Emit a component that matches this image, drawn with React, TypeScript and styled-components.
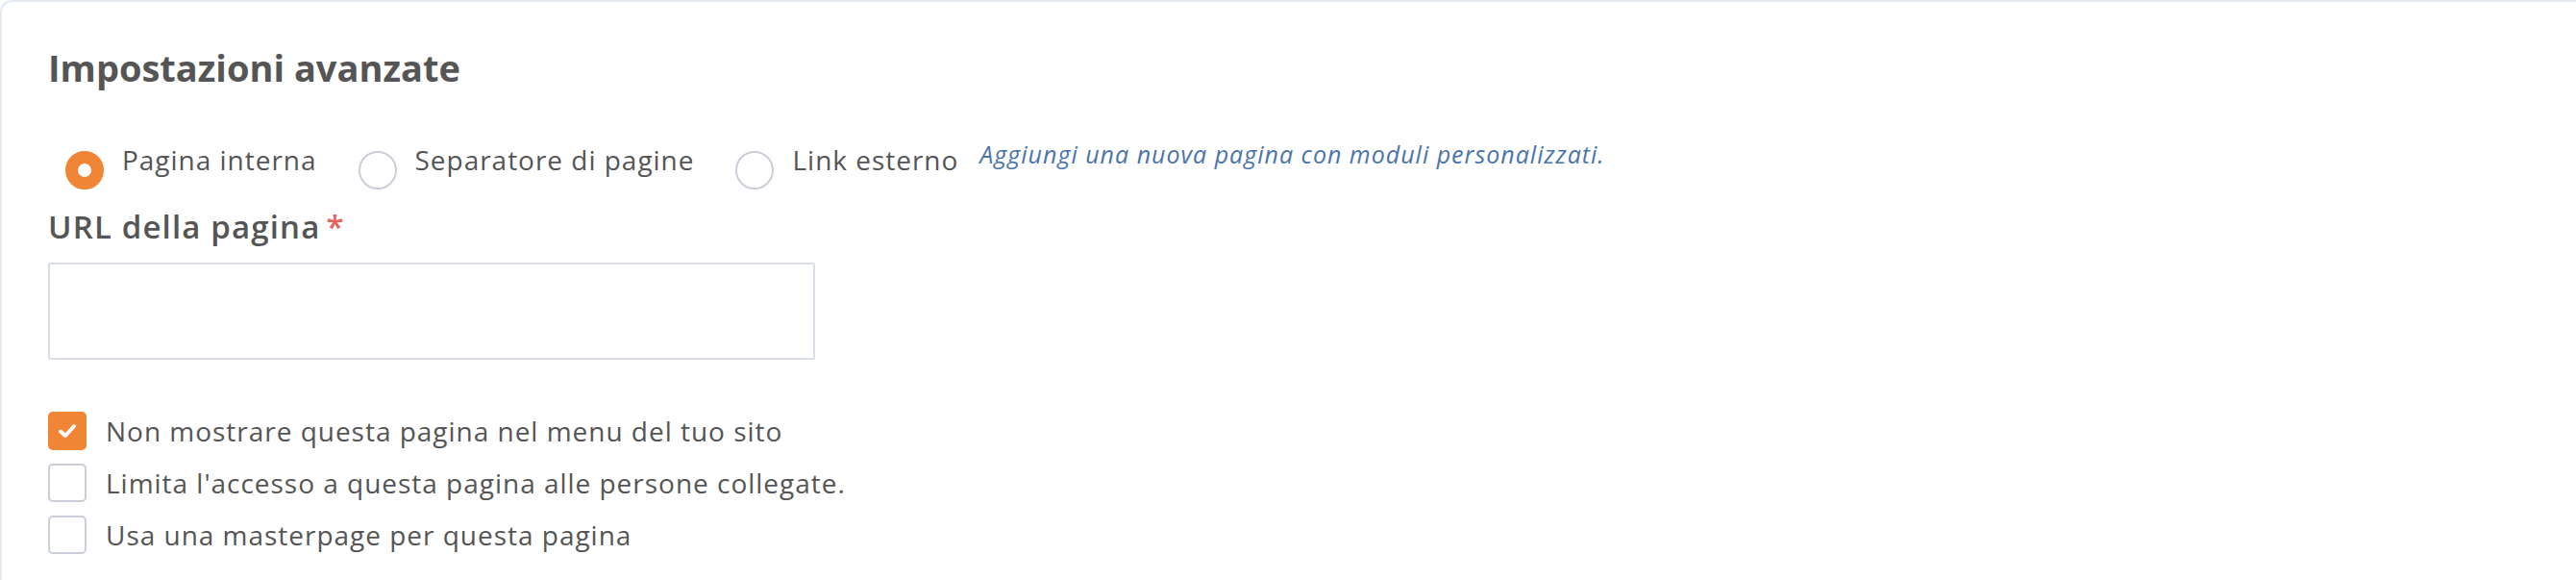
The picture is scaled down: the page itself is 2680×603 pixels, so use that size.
import React, { useState } from 'react';
import styled, { createGlobalStyle } from 'styled-components';

const GlobalStyle = createGlobalStyle`
  html, body {
    margin: 0;
    padding: 0;
    background: #ffffff;
  }
  body {
    font-family: 'Open Sans', 'Noto Sans', sans-serif;
    color: #555555;
  }
`;

const Card = styled.section`
  box-sizing: border-box;
  min-height: 640px;
  border-left: 2px solid #e4e9f2;
  border-top: 2px solid #e4e9f2;
  border-top-left-radius: 12px;
  padding: 44px 0 0 48px;
`;

const Title = styled.h2`
  margin: 0;
  font-size: 38px;
  line-height: 48px;
  font-weight: 700;
  color: #555555;
`;

const RadioRow = styled.div`
  display: flex;
  align-items: flex-start;
  margin-top: 55px;
  padding-left: 18px;
`;

const RadioItem = styled.label`
  display: flex;
  align-items: flex-start;
  margin-right: 43px;
  cursor: pointer;

  &:last-of-type {
    margin-right: 22px;
  }
`;

const RadioCircle = styled.span<{ $checked: boolean }>`
  box-sizing: border-box;
  width: 40px;
  height: 40px;
  margin-top: 8px;
  margin-right: 19px;
  border-radius: 50%;
  flex-shrink: 0;
  background: #ffffff;
  border: ${(p) => (p.$checked ? '13px solid #ef8535' : '2px solid #c9ced9')};
`;

const OptionText = styled.span`
  font-size: 28px;
  line-height: 34px;
  letter-spacing: 0.035em;
  color: #555555;
  white-space: nowrap;
`;

const Hint = styled.span`
  font-size: 25px;
  line-height: 29px;
  letter-spacing: 0.04em;
  font-style: italic;
  color: #4a74aa;
  margin-top: -3px;
  white-space: nowrap;
`;

const FieldLabel = styled.div`
  margin-top: 19px;
  font-size: 33px;
  line-height: 40px;
  font-weight: 600;
  letter-spacing: 0.035em;
  color: #555555;
`;

const Required = styled.span`
  color: #e5635b;
  margin-left: 6px;
`;

const TextInput = styled.input`
  display: block;
  box-sizing: border-box;
  width: 798px;
  height: 101px;
  margin-top: 17px;
  border: 2px solid #d9dee8;
  border-radius: 2px;
  outline: none;
  padding: 0 20px;
  font-size: 28px;
  font-family: inherit;
  color: #555555;
`;

const CheckList = styled.div`
  display: flex;
  flex-direction: column;
  gap: 14px;
  margin-top: 54px;
`;

const CheckItem = styled.label`
  display: flex;
  align-items: center;
  cursor: pointer;
`;

const CheckBox = styled.span<{ $checked: boolean }>`
  box-sizing: border-box;
  width: 40px;
  height: 40px;
  margin-right: 20px;
  border-radius: 5px;
  flex-shrink: 0;
  display: flex;
  align-items: center;
  justify-content: center;
  background: ${(p) => (p.$checked ? '#ef8535' : '#ffffff')};
  border: ${(p) => (p.$checked ? 'none' : '2px solid #c9ced9')};
`;

const options = ['Pagina interna', 'Separatore di pagine', 'Link esterno'];

const checks = [
  'Non mostrare questa pagina nel menu del tuo sito',
  "Limita l'accesso a questa pagina alle persone collegate.",
  'Usa una masterpage per questa pagina',
];

const App: React.FC = () => {
  const [selected, setSelected] = useState(0);
  const [checked, setChecked] = useState([true, false, false]);
  const [url, setUrl] = useState('');

  const toggle = (i: number) =>
    setChecked((prev) => prev.map((v, j) => (j === i ? !v : v)));

  return (
    <>
      <GlobalStyle />
      <Card>
        <Title>Impostazioni avanzate</Title>
        <RadioRow>
          {options.map((opt, i) => (
            <RadioItem key={opt} onClick={() => setSelected(i)}>
              <RadioCircle $checked={selected === i} />
              <OptionText>{opt}</OptionText>
            </RadioItem>
          ))}
          <Hint>Aggiungi una nuova pagina con moduli personalizzati.</Hint>
        </RadioRow>
        <FieldLabel>
          URL della pagina<Required>*</Required>
        </FieldLabel>
        <TextInput value={url} onChange={(e) => setUrl(e.target.value)} />
        <CheckList>
          {checks.map((text, i) => (
            <CheckItem key={text} onClick={() => toggle(i)}>
              <CheckBox $checked={checked[i]}>
                {checked[i] && (
                  <svg width="20" height="16" viewBox="0 0 20 16">
                    <polyline
                      points="3,8.5 8,13 17,3"
                      fill="none"
                      stroke="#ffffff"
                      strokeWidth="4"
                      strokeLinecap="round"
                      strokeLinejoin="round"
                    />
                  </svg>
                )}
              </CheckBox>
              <OptionText>{text}</OptionText>
            </CheckItem>
          ))}
        </CheckList>
      </Card>
    </>
  );
};

export default App;
